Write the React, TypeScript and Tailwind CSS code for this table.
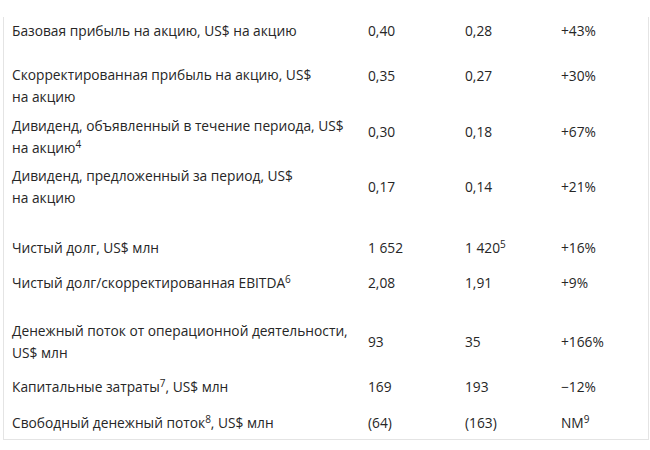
import React from "react";

type Row = {
  label: React.ReactNode;
  a: React.ReactNode;
  b: React.ReactNode;
  c: React.ReactNode;
  row: string;
  vals?: string;
};

const rows: Row[] = [
  {
    label: "Базовая прибыль на акцию, US$ на акцию",
    a: "0,40",
    b: "0,28",
    c: "+43%",
    row: "mt-[17px] h-[28px]",
  },
  {
    label: (
      <>
        Скорректированная прибыль на акцию, US$
        <br />
        на акцию
      </>
    ),
    a: "0,35",
    b: "0,27",
    c: "+30%",
    row: "mt-[19px] h-[44px]",
    vals: "pb-[20px]",
  },
  {
    label: (
      <>
        Дивиденд, объявленный в течение периода, US$
        <br />
        на акцию<sup className="text-[10px]">4</sup>
      </>
    ),
    a: "0,30",
    b: "0,18",
    c: "+67%",
    row: "mt-[7px] h-[44px]",
    vals: "pb-[10px]",
  },
  {
    label: (
      <>
        Дивиденд, предложенный за период, US$
        <br />
        на акцию
      </>
    ),
    a: "0,17",
    b: "0,14",
    c: "+21%",
    row: "mt-[6px] h-[44px]",
  },
  {
    label: "Чистый долг, US$ млн",
    a: "1 652",
    b: (
      <>
        1 420<sup className="text-[10px]">5</sup>
      </>
    ),
    c: "+16%",
    row: "mt-[28px] h-[22px]",
  },
  {
    label: (
      <>
        Чистый долг/скорректированная EBITDA<sup className="text-[10px]">6</sup>
      </>
    ),
    a: "2,08",
    b: "1,91",
    c: "+9%",
    row: "mt-[13px] h-[22px]",
  },
  {
    label: (
      <>
        Денежный поток от операционной деятельности,
        <br />
        US$ млн
      </>
    ),
    a: "93",
    b: "35",
    c: "+166%",
    row: "mt-[26px] h-[44px]",
  },
  {
    label: (
      <>
        Капитальные затраты<sup className="text-[10px]">7</sup>, US$ млн
      </>
    ),
    a: "169",
    b: "193",
    c: "−12%",
    row: "mt-[12px] h-[22px]",
  },
  {
    label: (
      <>
        Свободный денежный поток<sup className="text-[10px]">8</sup>, US$ млн
      </>
    ),
    a: "(64)",
    b: "(163)",
    c: (
      <>
        NM<sup className="text-[10px]">9</sup>
      </>
    ),
    row: "mt-[14px] h-[22px]",
  },
];

export default function App() {
  return (
    <div className="h-[450px] w-[650px] bg-white font-['Open_Sans',sans-serif] text-[13.75px] leading-[22px] text-[#262626]">
      <div className="ml-[3px] w-[646px] border-x border-b border-[#e4e4e4] pb-[5px] pl-[8px]">
        {rows.map((r, i) => (
          <div
            key={i}
            className={`grid grid-cols-[356px_97px_96px_1fr] items-center ${r.row}`}
          >
            <div className="whitespace-nowrap">{r.label}</div>
            <div className={r.vals}>{r.a}</div>
            <div className={r.vals}>{r.b}</div>
            <div className={r.vals}>{r.c}</div>
          </div>
        ))}
      </div>
    </div>
  );
}
